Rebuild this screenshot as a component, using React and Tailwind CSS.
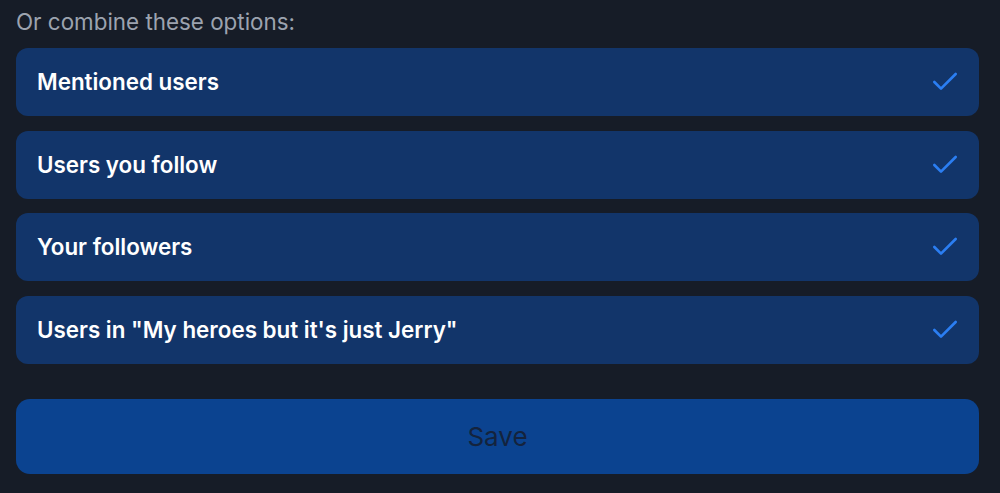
import { Check } from "lucide-react";

const options = [
    "Mentioned users",
    "Users you follow",
    "Your followers",
    'Users in "My heroes but it\'s just Jerry"',
];

function OptionRow({ label }) {
    return (
        <div className="flex items-center justify-between h-[68px] rounded-[12px] bg-[#12356a] pl-[21px] pr-[18px]">
            <span className="text-[22.4px] font-semibold text-white">{label}</span>
            <Check className="w-[32px] h-[32px] text-[#2b7ef2]" strokeWidth={2} />
        </div>
    );
}

export default function App() {
    return (
        <main className="min-h-[493px] w-full bg-[#161c27] pl-[16px] pr-[21px] pt-[7px] font-['Inter',sans-serif]">
            <p className="text-[22.4px] leading-[30px] text-[#9ca3af]">Or combine these options:</p>
            <div className="flex flex-col gap-[14.6px] mt-[11px]">
                {options.map((o) => (
                    <OptionRow key={o} label={o} />
                ))}
            </div>
            <button className="mt-[35px] w-full h-[75px] rounded-[14px] bg-[#0b4390] text-[26px] text-[#14233d]">
                Save
            </button>
        </main>
    );
}
